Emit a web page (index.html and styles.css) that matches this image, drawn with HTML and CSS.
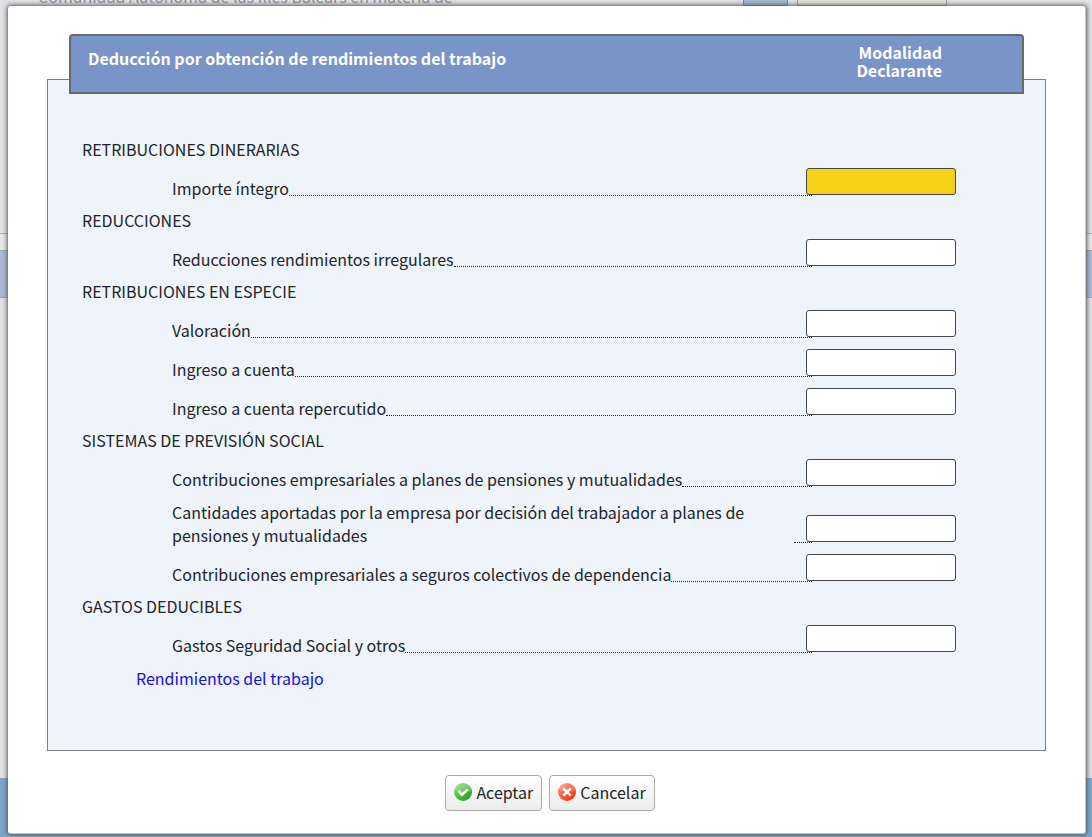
FILE: index.html
```html
<!DOCTYPE html>
<html lang="es">
<head>
<meta charset="utf-8">
<title>Deducción por obtención de rendimientos del trabajo</title>
<link rel="stylesheet" href="styles.css">
</head>
<body>
<div class="page" aria-hidden="true">
  <div class="page-main">
    <div class="page-row">
      <span class="page-text">Comunidad Autónoma de las Illes Balears en materia de</span>
      <span class="page-code"></span>
      <span class="page-amount"></span>
    </div>
    <div class="page-body"></div>
    <div class="page-gap"></div>
    <div class="page-band"></div>
  </div>
  <div class="page-footer"></div>
</div>

<form class="dialog" role="dialog" aria-labelledby="title">
  <header class="head">
    <h1 class="head-title" id="title">Deducción por obtención de rendimientos del trabajo</h1>
    <p class="head-column">Modalidad<br>Declarante</p>
  </header>
  <section class="panel">
    <h2 class="group">RETRIBUCIONES DINERARIAS</h2>
    <div class="row"><label class="label" for="f1">Importe íntegro</label><span class="leader"></span><input class="field field-active" id="f1" type="text"></div>
    <h2 class="group">REDUCCIONES</h2>
    <div class="row"><label class="label" for="f2">Reducciones rendimientos irregulares</label><span class="leader"></span><input class="field" id="f2" type="text"></div>
    <h2 class="group">RETRIBUCIONES EN ESPECIE</h2>
    <div class="row"><label class="label" for="f3">Valoración</label><span class="leader"></span><input class="field" id="f3" type="text"></div>
    <div class="row"><label class="label" for="f4">Ingreso a cuenta</label><span class="leader"></span><input class="field" id="f4" type="text"></div>
    <div class="row"><label class="label" for="f5">Ingreso a cuenta repercutido</label><span class="leader"></span><input class="field" id="f5" type="text"></div>
    <h2 class="group">SISTEMAS DE PREVISIÓN SOCIAL</h2>
    <div class="row"><label class="label" for="f6">Contribuciones empresariales a planes de pensiones y mutualidades</label><span class="leader"></span><input class="field" id="f6" type="text"></div>
    <div class="row"><label class="label" for="f7">Cantidades aportadas por la empresa por decisión del trabajador a planes de pensiones y mutualidades</label><span class="leader"></span><input class="field" id="f7" type="text"></div>
    <div class="row"><label class="label" for="f8">Contribuciones empresariales a seguros colectivos de dependencia</label><span class="leader"></span><input class="field" id="f8" type="text"></div>
    <h2 class="group">GASTOS DEDUCIBLES</h2>
    <div class="row"><label class="label" for="f9">Gastos Seguridad Social y otros</label><span class="leader"></span><input class="field" id="f9" type="text"></div>
    <a class="link" href="#">Rendimientos del trabajo</a>
  </section>
  <div class="actions">
    <button class="button" type="button">
      <svg class="icon" viewBox="0 0 18 18" aria-hidden="true">
        <defs><linearGradient id="green" x1="0" y1="0" x2="1" y2="1"><stop offset="0" stop-color="#9be08f"/><stop offset=".5" stop-color="#4fbd43"/><stop offset="1" stop-color="#169a0c"/></linearGradient></defs>
        <circle cx="9" cy="9" r="9" fill="url(#green)"/>
        <path d="M1 8a8 8 0 0 1 16 0Q9 10 1 8z" fill="#fff" opacity=".18"/>
        <path d="M4.4 8 8 11.6l5.8-5.2" fill="none" stroke="#fff" stroke-width="2.6"/>
      </svg>
      Aceptar
    </button>
    <button class="button" type="button">
      <svg class="icon" viewBox="0 0 18 18" aria-hidden="true">
        <defs><linearGradient id="red" x1="0" y1="0" x2="1" y2="1"><stop offset="0" stop-color="#ff9a85"/><stop offset=".5" stop-color="#f4573a"/><stop offset="1" stop-color="#f03000"/></linearGradient></defs>
        <circle cx="9" cy="9" r="9" fill="url(#red)"/>
        <path d="M1 8a8 8 0 0 1 16 0Q9 10 1 8z" fill="#fff" opacity=".18"/>
        <path d="M5.3 5.3l7.4 7.4M12.7 5.3l-7.4 7.4" fill="none" stroke="#fff" stroke-width="2.6"/>
      </svg>
      Cancelar
    </button>
  </div>
</form>
</body>
</html>
```
FILE: styles.css
```css
* { box-sizing: border-box; }

body {
  margin: 0;
  color: #212529;
  font: 16px/23px "Noto Sans CJK SC", "Noto Sans", sans-serif;
}

/* Page behind the dialog */
.page {
  display: flex;
  flex-direction: column;
  height: 100vh;
  overflow: hidden;
  background: #e0e1e5;
}

.page-main { flex: 1; }

.page-row {
  display: flex;
  gap: 9px;
  height: 21px;
  margin-top: -15px;
  padding: 0 145px 0 38px;
  color: #8c8e94;
}

.page-text { flex: 1; }

.page-code {
  width: 45px;
  background: #a2b8ce;
  border: 1px solid #768494;
}

.page-amount {
  width: 150px;
  background: #dfe1d5;
  border: 1px solid #9a9c98;
}

.page-body {
  height: 228px;
  border-bottom: 1px solid #b0b1b5;
}

.page-gap { height: 16px; background: #e6e7e9; }

.page-band {
  height: 48px;
  background: #acb9d6;
  border: solid #9ba2b4;
  border-width: 1px 0;
}

.page-footer { height: 59px; background: #7da5cc; }

/* Dialog */
.dialog {
  position: absolute;
  top: 6px;
  right: 6px;
  left: 8px;
  padding: 28px 39px 22px;
  background: #fff;
  border: 1px solid #c4c4c4;
  border-width: 0 1px 1px 0;
  border-radius: 3px;
  box-shadow: 0 0 4px 1px #555;
}

.head {
  position: relative;
  display: flex;
  justify-content: space-between;
  margin: 0 22px -15px;
  padding: 7px 80px 13px 17px;
  color: #fff;
  background: #7994c7;
  border: 2px solid #666a6e;
  border-radius: 4px 4px 0 0;
  font-weight: 700;
}

.head-title { margin: 0; padding-top: 4px; font-size: 16px; line-height: 23px; }

.head-column { margin: 0; line-height: 18px; text-align: right; }

.panel {
  padding: 54px 89px 56px 34px;
  background: #eff3fa;
  border: 1px solid #7b7e84;
}

.group {
  margin: 0;
  padding-bottom: 2px;
  font-size: 16px;
  font-weight: 400;
  line-height: 30px;
}

.row {
  display: flex;
  align-items: flex-end;
  padding: 2px 0 5px 90px;
}

.label { max-width: 622px; padding-top: 3px; }

.leader {
  flex: 1;
  min-width: 16px;
  margin: 0 -6px 4px 0;
  border-bottom: 1px dotted #212529;
}

.field {
  flex: none;
  width: 150px;
  height: 27px;
  margin: 0 0 5px;
  padding: 0 6px;
  background: #fff;
  border: 1px solid #44474f;
  border-radius: 3px;
  font: inherit;
}

.field-active { background: #f7d117; }

.link {
  display: block;
  width: fit-content;
  margin-left: 54px;
  color: #1212dc;
  line-height: 32px;
  text-decoration: none;
}

.actions {
  display: flex;
  justify-content: center;
  gap: 7px;
  padding: 24px 0 0 7px;
}

.button {
  display: flex;
  align-items: center;
  gap: 4px;
  height: 36px;
  padding: 0 8px 2px;
  color: #212529;
  background: linear-gradient(#fff, #ececec);
  border: 1px solid #a9a9a9;
  border-radius: 4px;
  font: inherit;
}

.icon { width: 18px; height: 18px; }
```
